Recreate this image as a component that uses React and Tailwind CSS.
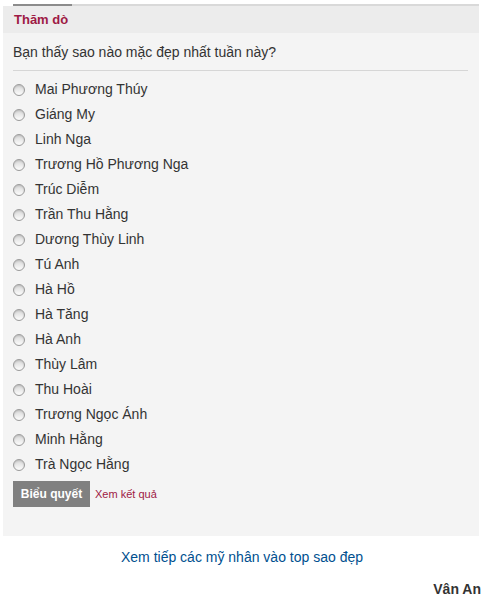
const options = [
  'Mai Phương Thúy',
  'Giáng My',
  'Linh Nga',
  'Trương Hồ Phương Nga',
  'Trúc Diễm',
  'Trần Thu Hằng',
  'Dương Thùy Linh',
  'Tú Anh',
  'Hà Hồ',
  'Hà Tăng',
  'Hà Anh',
  'Thùy Lâm',
  'Thu Hoài',
  'Trương Ngọc Ánh',
  'Minh Hằng',
  'Trà Ngọc Hằng',
];

// Old-style grey radio circle
const Radio = () => (
  <span className="w-[12px] h-[12px] rounded-full border border-[#9a9a9a] bg-gradient-to-b from-[#d8d8d8] to-[#fdfdfd] shadow-[inset_0_1px_2px_rgba(0,0,0,0.15)] shrink-0" />
);

export default function App() {
  return (
    <div className="w-[484px] h-[609px] overflow-hidden bg-white font-['Liberation_Sans',Arial,sans-serif] text-[#333]">
      {/* Poll panel */}
      <div className="ml-[3px] mt-[4px] w-[476px]">
        {/* tab line */}
        <div className="flex h-[2px]">
          <div className="w-[10px] bg-white" />
          <div className="w-[59px] bg-[#8c8c8c]" />
          <div className="flex-1 bg-[#d9d9d9]" />
        </div>
        <div className="h-[27px] bg-[#ececec] flex items-center pl-[11px]">
          <span className="text-[13px] font-bold text-[#9e1a45]">Thăm dò</span>
        </div>

        <div className="bg-[#f4f4f4] h-[503px] px-[10px] pt-[10px]">
          <div className="text-[14px] leading-[18px] text-[#333]">Bạn thấy sao nào mặc đẹp nhất tuần này?</div>
          <div className="mt-[9px] h-px bg-[#d6d6d6] w-[455px]" />

          <div className="mt-[6px]">
            {options.map((name) => (
              <label key={name} className="flex items-center h-[25px] gap-[10px]">
                <Radio />
                <span className="text-[14px] text-[#333]">{name}</span>
              </label>
            ))}
          </div>

          <div className="flex items-center gap-[5px] mt-[4px]">
            <button className="w-[77px] h-[26px] bg-[#808080] text-white text-[12px] font-bold">Biểu quyết</button>
            <a className="text-[11px] text-[#9e1a45]">Xem kết quả</a>
          </div>
        </div>
      </div>

      <div className="mt-[12px] text-center text-[14px] leading-[18px] text-[#00508f]">
        Xem tiếp các mỹ nhân vào top sao đẹp
      </div>

      <div className="mt-[13px] flex justify-end pr-[3px] whitespace-nowrap text-[14px] font-bold text-[#333]">
        Vân An
      </div>
    </div>
  );
}
